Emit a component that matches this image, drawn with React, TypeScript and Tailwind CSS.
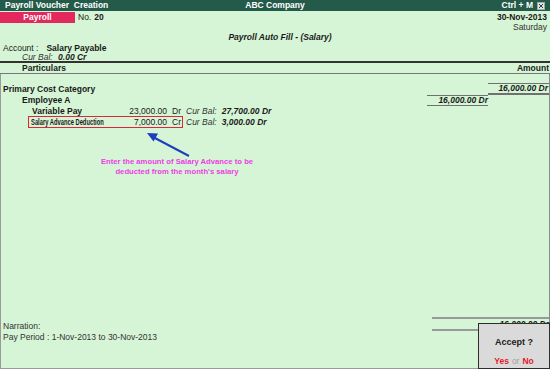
// Tally-style payroll voucher screen — fixed 550x369 layout
export default function App() {
  return (
    <div className="relative flex h-[369px] w-[550px] flex-col overflow-hidden bg-[#d6f5d6] font-['Liberation_Sans',Arial,sans-serif] text-[8.5px] text-[#1a1a1a]">
      {/* ── Title bar ── */}
      <div className="relative flex h-[11px] items-center bg-[#245a4a] px-[5px] text-[8.5px] font-bold leading-[11px] text-white">
        <span>Payroll Voucher&nbsp; Creation</span>
        <span className="absolute left-1/2 -translate-x-1/2">ABC Company</span>
        <span className="ml-auto mr-[4px]">Ctrl + M</span>
        <span className="flex h-[8px] w-[8px] items-center justify-center border border-[#9aa] bg-[#dfe6e3]">
          <svg width="6" height="6" viewBox="0 0 6 6">
            <path d="M1 1L5 5M5 1L1 5" stroke="#333" strokeWidth="1" />
          </svg>
        </span>
      </div>

      {/* ── Voucher header ── */}
      <div className="mt-[1px] flex h-[11px] items-center">
        <span className="h-[11px] w-[75px] bg-[#e2285c] text-center font-bold leading-[11px] text-white">Payroll</span>
        <span className="ml-[3px]">No.</span>
        <span className="ml-[3px] font-bold">20</span>
        <span className="ml-auto mr-[3px] font-bold">30-Nov-2013</span>
      </div>
      <div className="h-[9px] pr-[3px] text-right leading-[9px] text-[#333]">Saturday</div>
      <div className="h-[10px] text-center font-bold italic leading-[10px]">
        <span className="ml-[10px]">Payroll Auto Fill - (Salary)</span>
      </div>
      <div className="mt-[1px] flex h-[10px] items-center pl-[3px] leading-[10px]">
        <span>Account :</span>
        <span className="ml-[8px] font-bold">Salary Payable</span>
      </div>
      <div className="h-[8px] pl-[22px] italic leading-[8px] text-[#333]">
        Cur Bal: <span className="ml-[3px] font-bold text-[#1a1a1a]">0.00 Cr</span>
      </div>

      {/* ── Column headings ── */}
      <div className="border-t-2 border-[#333]" />
      <div className="flex h-[11px] items-center border-b border-[#777] px-[1px] font-bold leading-[11px]">
        <span className="ml-[21px]">Particulars</span>
        <span className="ml-auto">Amount</span>
      </div>

      {/* ── Body ── */}
      <div className="relative flex flex-1 flex-col border-l border-r border-[#9a9a9a] border-r-[#8a8a8a]">
        <div className="mt-[9px] flex h-[12px]">
          <div className="flex-1 pl-[2px] font-bold leading-[12px]">Primary Cost Category</div>
          <div className="w-[61px]" />
          <div className="w-[61px] border-b-2 border-t border-[#707070] pr-[1px] text-right font-bold italic leading-[9px]">
            16,000.00 Dr
          </div>
        </div>

        <div className="flex h-[11px]">
          <div className="flex-1 pl-[21px] font-bold leading-[11px]">Employee A</div>
          <div className="w-[61px] border-b border-t border-[#707070] text-right font-bold italic leading-[9px]">
            16,000.00 Dr
          </div>
          <div className="w-[61px]" />
        </div>

        <LedgerRow label="Variable Pay" amount="23,000.00" side="Dr" bal="27,700.00 Dr" />
        <LedgerRow label="Salary Advance Deduction" amount="7,000.00" side="Cr" bal="3,000.00 Dr" boxed />

        {/* annotation */}
        <div className="mt-[29px] w-[352px] text-center text-[7.7px] font-bold leading-[10px] text-[#ee3ce8]">
          <p>Enter the amount of Salary Advance to be</p>
          <p>deducted from the month's salary</p>
        </div>
        <svg className="absolute left-[140px] top-[55px]" width="56" height="32" viewBox="0 0 56 32">
          <path d="M48 27L12 8" stroke="#1d3fbf" strokeWidth="2" />
          <path d="M6 4L17 4.5L12.5 12.5Z" fill="#1d3fbf" />
        </svg>

        <div className="flex-1" />

        {/* ── Footer ── */}
        <div className="flex h-[14px]">
          <div className="flex flex-1 items-end pl-[2px] leading-[10px] text-[#333]">Narration:</div>
          <div className="w-[117px] border-b-2 border-t-2 border-[#9a9a9a] text-right font-bold italic leading-[10px]">
            16,000.00 Dr
          </div>
        </div>
        <div className="h-[12px] pl-[2px] leading-[12px] text-[#333]">Pay Period : 1-Nov-2013 to 30-Nov-2013</div>
        <div className="h-[26px] border-b border-[#9a9a9a]" />

        {/* ── Accept prompt ── */}
        <div className="absolute bottom-0 right-[-1px] flex h-[46px] w-[72px] flex-col items-center border border-[#2e2e2e] bg-[#dadada]">
          <span className="mt-[12px] text-[9px] font-bold leading-[12px]">Accept ?</span>
          <span className="mt-auto mb-[2px] text-[8.5px] font-bold leading-[10px]">
            <span className="text-[#e8182e]">Yes</span>
            <span className="mx-[3px] font-normal text-[#a0a0a0]">or</span>
            <span className="text-[#e8182e]">No</span>
          </span>
        </div>
      </div>
    </div>
  )
}

function LedgerRow({
  label,
  amount,
  side,
  bal,
  boxed,
}: {
  label: string
  amount: string
  side: string
  bal: string
  boxed?: boolean
}) {
  return (
    <div className={`flex items-center pl-[27px] ${boxed ? 'h-[12px]' : 'h-[10px]'}`}>
      <div
        className={`flex w-[155px] items-center pr-[2px] ${
          boxed ? 'h-[12px] border border-[#e2233a]' : 'h-[10px] border border-transparent'
        }`}
      >
        {boxed ? (
          <span className="inline-block w-[75px] origin-left scale-x-[0.68] whitespace-nowrap pl-[3px] text-[8.5px] font-bold">
            {label}
          </span>
        ) : (
          <span className="pl-[3px] font-bold">{label}</span>
        )}
        <span className="ml-auto">{amount}</span>
        <span className="w-[13px] pl-[5px]">{side}</span>
      </div>
      <span className="ml-[3px] italic text-[#333]">Cur Bal:</span>
      <span className="ml-[5px] font-bold italic">{bal}</span>
    </div>
  )
}
